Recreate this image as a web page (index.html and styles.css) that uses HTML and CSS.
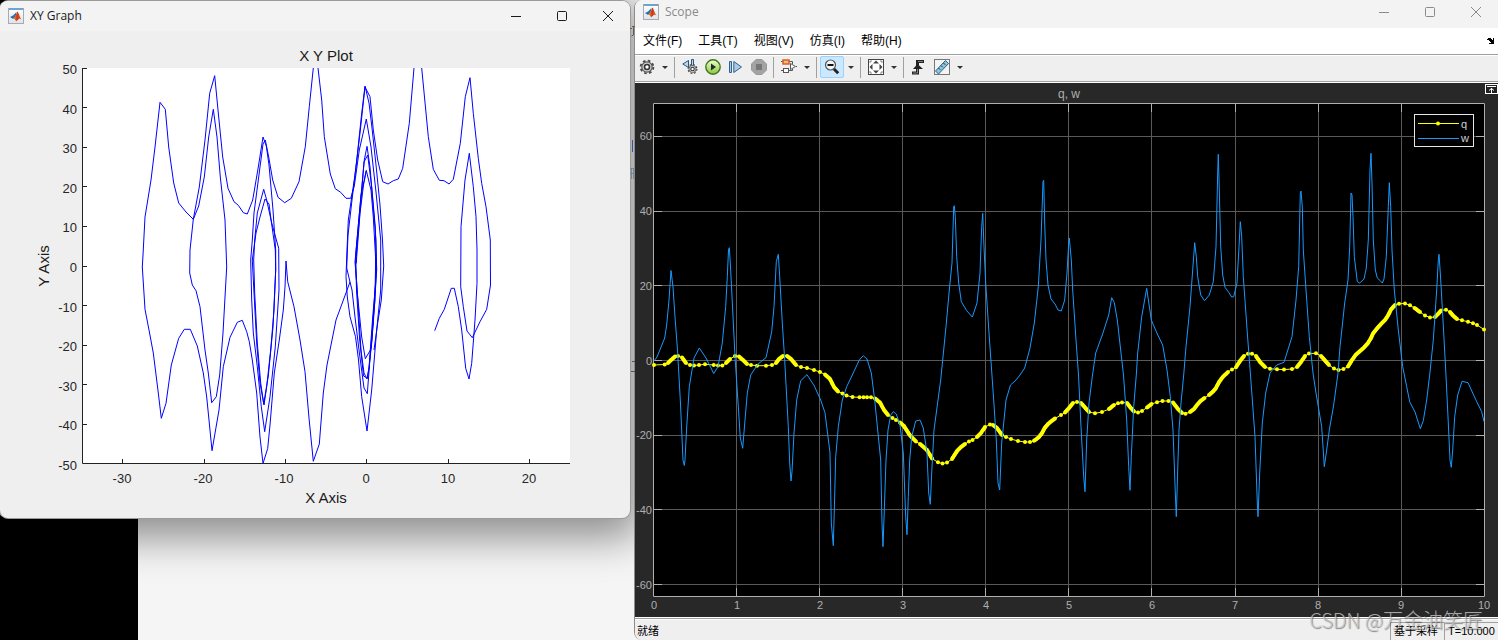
FILE: index.html
```html
<!DOCTYPE html>
<html lang="zh-CN">
<head>
<meta charset="utf-8">
<title>XY Graph / Scope</title>
<link rel="stylesheet" href="styles.css">
</head>
<body>
<svg class="defs" width="0" height="0" aria-hidden="true">
  <defs>
    <linearGradient id="lgFrame" x1="0" y1="0" x2="0" y2="1"><stop offset="0" stop-color="#fff"/><stop offset="1" stop-color="#dfe3ea"/></linearGradient>
    <linearGradient id="lgFlame" x1="0" y1="0" x2="1" y2="0"><stop offset="0" stop-color="#f6a12c"/><stop offset=".5" stop-color="#c9351b"/><stop offset="1" stop-color="#e8762a"/></linearGradient>
    <linearGradient id="lgGreen" x1="0" y1="0" x2="0" y2="1"><stop offset="0" stop-color="#f0ffcf"/><stop offset="1" stop-color="#8cc63a"/></linearGradient>
    <symbol id="matlab" viewBox="0 0 16 16">
      <rect x=".5" y=".5" width="15" height="15" fill="url(#lgFrame)" stroke="#a3abb5"/>
      <rect x="1" y="0" width="14" height="2" fill="#6fa3cc"/>
      <path d="M2 9l3-1.500L8.500 4 7.500 9 5 11z" fill="#2f6fae"/>
      <path d="M5 11l2.500-3L9.300 3.500c1.400 1 2.200 5 4.200 8-1.500-1-2.300-1-3.500.2L8 13.500C7.500 11.500 6.500 11 5 11z" fill="url(#lgFlame)"/>
    </symbol>
    <symbol id="gear" viewBox="0 0 16 16">
      <circle cx="8" cy="8" r="6.400" fill="none" stroke="#4a4a4a" stroke-width="1.800" stroke-dasharray="2.700 2.327"/>
      <circle cx="8" cy="8" r="5.200" fill="#d2d2d2" stroke="#555" stroke-width="1.200"/>
      <circle cx="8" cy="8" r="2.500" fill="#fff" stroke="#333" stroke-width="1.600"/>
    </symbol>
  </defs>
</svg>

<main class="desktop">
  <div class="terminal"></div>
  <svg class="fragments" width="6" height="400" viewBox="629 0 6 400" aria-hidden="true">
    <path d="M630 28.500h2M632 26.500h3M633.500 27v8l-2 1" stroke="#6a5a50" fill="none"/>
    <path d="M632.500 140v12" stroke="#3c4ea8"/>
    <path d="M630 168.500h4M630 173.500h4M631.500 168v11M633.500 168v11" stroke="#7b8794"/>
    <path d="M632 361.500h3M631 371.500h4" stroke="#555"/>
  </svg>

  <section class="window xy" aria-label="XY Graph">
    <header class="titlebar">
      <svg class="app-icon" width="16" height="16"><use href="#matlab"/></svg>
      <h1 class="window-title">XY Graph</h1>
      <div class="caption-buttons">
        <button class="cap" aria-label="Minimize"><svg width="12" height="12"><path d="M1 6.500h10"/></svg></button>
        <button class="cap" aria-label="Maximize"><svg width="12" height="12"><rect x="1.500" y="1.500" width="9" height="9" rx="1"/></svg></button>
        <button class="cap" aria-label="Close"><svg width="12" height="12"><path d="M1 1l10 10M11 1L1 11"/></svg></button>
      </div>
    </header>
    <svg class="xy-plot" viewBox="0 31 630 487" role="img" aria-label="X Y Plot">
      <clipPath id="xyClip"><rect x="82" y="68" width="488" height="396"/></clipPath>
      <rect x="82" y="68" width="488" height="396" fill="#fff"/>
      <g class="xy-lines" clip-path="url(#xyClip)">
        <polyline points="356.300,263.300 356.700,256.700 360,213.300 363.500,185 366.300,170.500 371,190 373.300,217 375.700,260 375.700,283 372.700,317 369,368 367,379 364,373 361,350 356.700,283 355,262 357,240 360,206.700 364.300,160 367,146.300 370,167 372.700,200 376,240 376.700,270 373.300,323 371,349 365.300,358.700 361.700,337 357.300,293 355.500,266 357.500,240 361,200 364,162 367.700,155 371.700,187 375.300,227 376.300,270 374,305 372,340 369,368 367.300,378 363.500,376 359.500,338 356.500,290 355.700,255 361,195 366.300,170.500"/>
        <polyline points="375.700,255 375,300 371,345 367.300,393.700 364,388 359,350 355,317 352,290 350,282 346.700,291 336,320 327,365 323.300,393 319.300,444 313.300,461.300 309,418 305,371.700 300,340 294,306.700 287.700,281.700 286,261 285,287 283.300,310 279.300,340 274.300,373 270,425 267.700,448.500 263,463.500 260,437 256.700,393 252.300,360 249.300,341.700 246.700,331.700 242.300,320.300 237.300,322.300 230,337.300 223.300,366.700 219,410 212,450.700 209.300,423 206.700,397 203.300,373 197.300,346 190.300,329.300 184.300,329.300 178.700,338.300 171.300,365 166,403.300 161.300,418.300 158.300,393 153.300,353 149,330 145,309.300 142.300,267 143,255 145,217 151,180 155,147 160,102.300 165.300,109.300 168.700,147 173.700,183 178.700,203 186,212 193.300,219.300 198.700,206 204.300,177 208.700,137 213.300,109.300 217,137 220.300,177 225,220 226.700,267 223,333 219.700,375 216.300,396.700 211.700,402.700 208.300,373 205,350 200,306.700 196,290.700 192.300,285 189.700,273 190,250 193.300,219.300 199.300,187 205,140 209.700,93.300 214.700,75.700 218.300,113 222.700,157 228,188.300 234,201.700 238.300,205.300 243.300,212.700 247.300,214 252.700,200 258.300,167 263,137 266.300,146 269,165 273,210 275.700,250 275.700,270 274,310 270.700,350 266.700,386.700 264,405 260,383 256.700,343 254,293 252.300,260 256,233 260,217 265,199 269,204 270.700,217 275.300,250 275.700,270 273,327 268.300,376 263.700,404 260.700,383 257.300,343 254.700,293 253.700,260 254.700,240 257.300,213 263.700,189.300 266.700,200 271.700,223 278.700,248.300 279,290 275.300,346.700 270,396.700 264.700,431.700 261.300,406.700 257.300,366.700 253.300,333 251.700,300 250.700,260 252.300,240 254,213 260,167 263,144 265.300,140 268.700,157 272.700,180 278,197.300 284.700,202.700 291.300,198.300 299,181.700 305.300,146.700 309.300,106.700 313.300,68 315.700,50 318,68 321.700,100 324.300,136.700 330.300,174 335.300,188.700 340.700,192.300 346,198.300 350.700,198.300 354.300,186 359.300,150 366.300,119 371,147 376,192 380.700,240 380.700,290 376.700,330 371.700,390 367,431 361.700,396.700 358.500,360 355.500,336.700 350,316.700 347.300,297 346,276.700 347,250 348.300,220 355,175 360,133 365,87 370,96.700 373.300,130 377.700,160 382.700,181.700 388,184 393.300,180.700 398.300,179 402.700,168.300 409.300,123.300 414,68 418,40 421.700,68 428.300,136.700 433.300,169.300 439.300,180.300 444,180.700 449,184 453.300,179.300 460.300,143.300 465.300,96.700 470,77.700 473.300,113.300 478.300,158.300 481.700,183.300 486,206.700 490.300,240 490.500,285 486.700,309.300 480,321.700 472.300,337.700 467,331 463.300,306.700 460.700,286.700 461,226.700 465,180 469.300,153.300 473.300,186.700 476,216.700 477,250 477,283.300 475,320 471.700,363.300 469,379 465.700,368.300 461.700,330 458.300,306.700 454.300,288.300 451.300,288.300 444.300,309.300 439.300,318.300 434.700,330.700"/>
        <polyline points="350,282 346.700,268 348,235 352,200 357,158 361.500,115 365,86 369,103 372,128 376,165 380,205 382.500,240 383.700,266 381.300,300 377.700,323 374,350"/>
      </g>
      <path class="xy-axes" d="M82.500 68V463.500H570M82 68.500h5M82 107.500h5M82 147.500h5M82 186.500h5M82 226.500h5M82 266.500h5M82 305.500h5M82 345.500h5M82 384.500h5M82 424.500h5M122.500 464v-5M204.500 464v-5M285.500 464v-5M366.500 464v-5M448.500 464v-5M529.500 464v-5"/>
      <g class="xy-ticks xy-ticks-y">
        <text x="77" y="74">50</text><text x="77" y="114">40</text><text x="77" y="153">30</text><text x="77" y="193">20</text><text x="77" y="232">10</text><text x="77" y="272">0</text><text x="77" y="312">-10</text><text x="77" y="351">-20</text><text x="77" y="391">-30</text><text x="77" y="430">-40</text><text x="77" y="470">-50</text>
      </g>
      <g class="xy-ticks">
        <text x="122" y="483">-30</text><text x="203" y="483">-20</text><text x="284" y="483">-10</text><text x="366" y="483">0</text><text x="448" y="483">10</text><text x="529" y="483">20</text>
      </g>
      <text class="xy-label" x="326" y="61">X Y Plot</text>
      <text class="xy-label" x="326" y="503">X Axis</text>
      <text class="xy-label" transform="translate(49 266) rotate(-90)">Y Axis</text>
    </svg>
  </section>

  <section class="window scope" aria-label="Scope">
    <header class="titlebar">
      <svg class="app-icon" width="16" height="16"><use href="#matlab"/></svg>
      <h1 class="window-title">Scope</h1>
      <div class="caption-buttons">
        <button class="cap" aria-label="Minimize"><svg width="12" height="12"><path d="M1 6.500h10"/></svg></button>
        <button class="cap" aria-label="Maximize"><svg width="12" height="12"><rect x="1.500" y="1.500" width="9" height="9" rx="1"/></svg></button>
        <button class="cap" aria-label="Close"><svg width="12" height="12"><path d="M1 1l10 10M11 1L1 11"/></svg></button>
      </div>
    </header>
    <nav class="menubar">
      <button class="menu">文件(F)</button>
      <button class="menu">工具(T)</button>
      <button class="menu">视图(V)</button>
      <button class="menu">仿真(I)</button>
      <button class="menu">帮助(H)</button>
      <button class="dock" aria-label="Dock"><svg width="8" height="8"><path d="M0 2h1V1h3v1h1v1h1V1h1v6H2V6h2V5H3V4H2V3H0z" fill="#000"/></svg></button>
    </nav>
    <div class="toolbar">
      <button class="tool" aria-label="Settings"><svg width="16" height="16"><use href="#gear"/></svg></button>
      <button class="caret" aria-label="Settings options"></button>
      <i class="sep"></i>
      <button class="tool" aria-label="Step back"><svg width="16" height="16" viewBox="0 0 16 16"><path d="M6.500 1.500v7L.8 5z" fill="#bcd8ee" stroke="#28567c"/><path d="M9.500.5h2v6h-2z" fill="#bcd8ee" stroke="#28567c"/><use href="#gear" x="5" y="4.500" width="11" height="11"/></svg></button>
      <button class="tool" aria-label="Run"><svg width="16" height="16" viewBox="0 0 16 16"><circle cx="8" cy="8" r="7.200" fill="url(#lgGreen)" stroke="#41761b" stroke-width="1.400"/><path d="M6 4.500l5 3.500-5 3.500z" fill="#1d2c3a"/></svg></button>
      <button class="tool" aria-label="Step forward"><svg width="16" height="16" viewBox="0 0 16 16"><path d="M1.500 2.500h2v11h-2zM5.800 2.500v11L13.500 8z" fill="#a9cbe8" stroke="#2f618e"/></svg></button>
      <button class="tool" aria-label="Stop"><svg width="16" height="16" viewBox="0 0 16 16"><path d="M5 .5h6L15.500 5v6L11 15.500H5L.5 11V5z" fill="#a3a3a3" stroke="#999"/><rect x="5" y="5" width="6" height="6" fill="#777"/></svg></button>
      <i class="sep"></i>
      <button class="tool" aria-label="Highlight block"><svg width="16" height="16" viewBox="0 0 16 16"><path d="M8 2.500h3.500v2.500M0 2.500h2M0 11.500h2M8 11.500h3.500V10M15 7.500h1" fill="none" stroke="#555"/><path d="M9.500 4.500l5 3-5 3z" fill="#fff" stroke="#555"/><rect x="2" y="1" width="6" height="4" fill="#f8bb79" stroke="#d9541a" stroke-width="1.400"/><rect x="2.500" y="9.500" width="5" height="4" fill="#fff" stroke="#555"/></svg></button>
      <button class="caret" aria-label="Highlight options"></button>
      <i class="sep"></i>
      <button class="tool selected" aria-label="Zoom out"><svg width="16" height="16" viewBox="0 0 16 16"><path d="M9.500 9.500l4.700 4.700" stroke="#222" stroke-width="3"/><circle cx="6.500" cy="6" r="5" fill="#eef6fb" stroke="#555" stroke-width="1.200"/><path d="M3.500 6h6" stroke="#111" stroke-width="2"/></svg></button>
      <button class="caret" aria-label="Zoom options"></button>
      <i class="sep"></i>
      <button class="tool" aria-label="Fit to view"><svg width="16" height="16" viewBox="0 0 16 16"><rect x=".5" y=".5" width="15" height="15" fill="#fff" stroke="#444"/><path d="M8 1.500l3 3H5zM8 14.500l3-3H5zM1.500 8l3-3v6zM14.500 8l-3-3v6z" fill="#444"/><path d="M2 4V2h2M12 2h2v2M2 12v2h2M12 14h2v-2" fill="none" stroke="#888"/></svg></button>
      <button class="caret" aria-label="Fit options"></button>
      <i class="sep"></i>
      <button class="tool" aria-label="Trigger"><svg width="16" height="16" viewBox="0 0 16 16"><path d="M1 14h5.500V2.500H13" fill="none" stroke="#222" stroke-width="3"/><path d="M2 10l4.500-5L12 10z" fill="#222"/><path d="M2 14h4.500V10M7 2.500h5" fill="none" stroke="#999" stroke-width=".8"/></svg></button>
      <button class="tool" aria-label="Measurements"><svg width="16" height="16" viewBox="0 0 16 16"><rect x=".5" y=".5" width="15" height="15" fill="#f4f4f4" stroke="#777"/><path d="M1.500 12L11.500 1.500l3 3L4.500 15z" fill="#8fc4df" stroke="#2d617f"/><path d="M4.500 9l1.800 1.800M7 6.500l1.800 1.800M9.500 4l1.800 1.800" stroke="#1c4058"/></svg></button>
      <button class="caret" aria-label="Measurement options"></button>
    </div>
    <div class="plot-area">
      <svg class="scope-plot" viewBox="635 83 863 534" role="img" aria-label="q, w">
        <rect x="653" y="103" width="832" height="494" fill="#000"/>
        <path class="grid" d="M736.500 104V596M819.500 104V596M902.500 104V596M985.500 104V596M1068.500 104V596M1151.500 104V596M1235.500 104V596M1318.500 104V596M1401.500 104V596M654 136.500H1484M654 211.500H1484M654 285.500H1484M654 360.500H1484M654 435.500H1484M654 509.500H1484M654 584.500H1484"/>
        <path class="ticks" d="M653.500 103.500H1484.500V596.500H653.500zM736.500 104v8M819.500 104v8M902.500 104v8M985.500 104v8M1068.500 104v8M1151.500 104v8M1235.500 104v8M1318.500 104v8M1401.500 104v8M736.500 596v-8M819.500 596v-8M902.500 596v-8M985.500 596v-8M1068.500 596v-8M1151.500 596v-8M1235.500 596v-8M1318.500 596v-8M1401.500 596v-8M654 136.500h8M654 211.500h8M654 285.500h8M654 360.500h8M654 435.500h8M654 509.500h8M654 584.500h8M1484 136.500h-8M1484 211.500h-8M1484 285.500h-8M1484 360.500h-8M1484 435.500h-8M1484 509.500h-8M1484 584.500h-8"/>
        <polyline class="signal-q" id="signalQ" points="654,365 664.700,364.500 668,363 671,360 675,356.500 678,356 682,357.500 686,363 690,365 694,365.500 699,365 705,364.300 713.700,365 718,365.500 722.300,365.500 726,363 730,359 735,356 739,356.500 743,360 747,364 751,365 757,365.700 766,365.700 772,365 776,363 779,359 783,356 787,356 791,359 796,365 801,367 807,368 814,370 820,372 825,374.500 830,379 834,387 838,391.500 842.500,393.500 846.500,395.500 852.500,397 859.500,397.300 863.500,397.300 867,397.300 871,397.300 875,398.500 880,402.500 884,410 888,415 892.500,418 896,420 900,422.500 904,426 909,434 912,437.500 916,441.500 920,444 923,446.500 927,450 932,458.500 938,462.300 942.500,463.500 947,462.500 952,459 957,451 961,447 965,444 969,441.500 972.500,440 977,437 981,433 985,427 990,424.500 993,425 997,428 1002,435 1006,437 1011,439 1018,441 1025,442 1030,442 1034,440.800 1038.500,437.500 1042,433 1045,427.500 1048,424 1051,421.500 1055,418.500 1061,415 1065,412.500 1069,408 1073,403 1077,402 1081,403 1085,407.500 1089,412 1095,413.300 1102,412 1109,409 1114,405 1118,403.300 1122,402.500 1127,403 1130,407 1134,411.500 1138,412.500 1142,411 1147,407.500 1151.500,404 1157,402.200 1162.500,401 1168.500,401 1173,402.500 1178,409 1182,413 1185.500,413.700 1190,412 1194,409 1197,405 1200.500,401 1204.500,398 1209,395 1213,391.500 1216,388 1219,382 1223,376.700 1228,372 1232,369.500 1236,367.300 1240,361 1244,356 1248,353.700 1252,353.700 1256,356 1260,362 1265,367 1270,368.700 1277,369.300 1284,369.600 1292,369 1297,367 1301,362 1305,356 1309,353.500 1316,353.300 1321,356 1325,360.500 1329,365 1334,368.500 1338.500,370 1343.500,369 1348,366.500 1352,360 1356,354.500 1360,351 1364,347.500 1368,343 1371,338 1373,333.500 1377,328.500 1381,324 1385,320 1388,315.500 1391,309.500 1395,305 1399,303.700 1405,303.500 1410,305.300 1414.500,308 1420,312 1425,315.500 1430,317.500 1435,317 1438,314 1441,310.500 1446,309.700 1450,312 1453,315.500 1457,319 1462,320.300 1468,321.800 1473,323.300 1477,325 1484,329.500"/>
        <g class="markers-q" id="markersQ"></g>
        <polyline class="signal-w" points="654,361 657,357 664.700,338 666.700,325 669,300 671,270.500 673,287 675,317 677.500,350 680.500,404 683,460 684.300,465.500 685,460 686.700,427 689.300,386.700 694,358 699.300,348 706,358 713.700,373.500 718,366.700 722.300,343 725.700,306.700 727.300,276.700 728.500,250 729.300,247.700 730.300,263 731.700,290 735,356.700 738,402 740.300,438 742.700,448.300 745,420 747.300,393 750.700,375 758,364 766,357.700 771.700,331.700 774,306.700 776.300,261.700 778.300,254.300 779.700,276.700 782.300,323 784.700,360 787,403 788.300,426.700 789.700,463 791,481 792,471.700 794,433 796.700,400 800.700,380.700 807,374.700 814.300,386 820.700,400 825,412.700 830,453 831.300,523 833.300,545.700 834.300,510 835.700,456.700 838.300,426.700 842.300,400 846.700,386.700 852.300,375 859.300,360 863.300,355.700 867,359 871.300,373 874.700,400 880.700,460 882,523.300 883,546.700 884.300,510 886,460 888,430 890.700,415 893.300,411.700 896.300,414 900,425 903.300,453 905.700,516.700 907,534.700 908.300,496.700 909.700,460 911.700,436.700 915.700,421 920,420 923.300,428 927,453 928.700,493 930.300,504.300 931.700,473 934,430 938,400 940.700,380 946,326.700 949.300,290 952,263 953.700,206.700 954.300,205.700 955.300,216.700 956.700,256.700 958.700,283 961.300,301.700 966.700,310.700 972.300,317 977,303 980,273 981.700,226.700 982.700,213.300 984,246.700 985.700,283 989,333 992.300,380 993.700,400 996.300,440 998,483 999.700,490 1001.700,443 1006,400 1010.500,385 1016,380 1020,375 1024.700,368 1030,348 1034.300,323 1038.300,286.700 1041,240 1043,181.700 1043.700,180.300 1044.700,223 1046,260 1048,285 1051,299 1055,304 1058,310 1061.300,311 1064.700,300 1067,273 1068.700,243 1069.300,238 1071.300,260 1072.700,290 1076,340 1078.500,375 1081,426.700 1083.700,476.700 1085,491.700 1086.700,440 1089,403 1092.500,375 1095.700,353 1102.300,335 1108.700,315 1111.700,297.700 1114.300,302.700 1117.300,320 1121,353 1123.500,375 1126.700,420 1128.700,466.700 1130,490.300 1131.300,456.700 1133.700,406.700 1136.300,375 1137.700,353 1141.700,316.700 1146.700,288.300 1151.300,320 1157.300,334 1162.700,345 1167,370 1170.300,396.700 1173,430 1175.300,493 1176.300,516.700 1177.700,470 1179,430 1181,403 1183.700,375 1186,346.700 1190,306.700 1192.700,270 1194.700,242.700 1196.300,256.700 1197.700,276.700 1200.700,295 1204.500,300.700 1209.300,295 1213.300,281.700 1216,246.700 1217.700,173 1218.300,154.300 1219.300,190 1220.700,246.700 1222.700,275 1225,287.300 1228.700,292.300 1231.700,297 1233.700,296.700 1237,283 1239,246.700 1240.300,221.700 1241.700,236.700 1243.300,276.700 1247.300,333 1250.500,375 1255,436.700 1257.300,503 1258,516.700 1259.700,473 1262.300,423 1265.700,393 1270,373 1276.700,365 1284,362.300 1292,336.700 1296,300 1298.700,266.700 1300.300,193 1301,191 1302.300,206.700 1303.300,250 1306,290 1309.300,336.700 1313,373 1316,393 1321.700,426.700 1324.300,466.700 1326.700,450 1329.300,430 1333.700,405 1338,373 1340,346.700 1344.700,303 1348,280 1349.700,246.700 1351,193 1352,195 1353,216.700 1354.300,256.700 1357.300,281.700 1359.700,283 1364,279 1366.300,268 1368.300,240 1370,170 1371,153.300 1372,183 1373.300,240 1375.300,270 1377.300,278 1380.300,280.700 1382.300,283 1384,279 1386.300,256.700 1388.300,206.700 1389.300,182.700 1390.700,206.700 1392,250 1394.300,290 1398.300,330 1402.700,366.700 1406.700,386.700 1409.700,401.700 1415,412 1420.300,428.700 1423.300,420.700 1426.700,400 1430,372 1433.300,340 1436.700,290 1438.300,260 1439,254.300 1440.300,273 1443,320 1446,376 1448.300,423 1450,460 1451.300,467.300 1452.700,450 1454.700,416.700 1457.700,395 1462,381.300 1468,382.700 1476.700,401.700 1481.700,411.700 1484,421.700"/>
        <g class="scope-ticks scope-ticks-y">
          <text x="652" y="140">60</text><text x="652" y="215">40</text><text x="652" y="290">20</text><text x="652" y="365">0</text><text x="652" y="439">-20</text><text x="652" y="514">-40</text><text x="652" y="589">-60</text>
        </g>
        <g class="scope-ticks">
          <text x="654" y="609">0</text><text x="737" y="609">1</text><text x="820" y="609">2</text><text x="903" y="609">3</text><text x="986" y="609">4</text><text x="1069" y="609">5</text><text x="1152" y="609">6</text><text x="1235" y="609">7</text><text x="1318" y="609">8</text><text x="1401" y="609">9</text><text x="1484" y="609">10</text>
        </g>
        <text class="scope-title" x="1069" y="98">q, w</text>
        <rect x="1414.500" y="114.500" width="59" height="32" fill="#000" stroke="#e6e6e6"/>
        <path d="M1418 123.500h41" stroke="#ff0"/><circle cx="1438" cy="123.500" r="2" fill="#ff0"/>
        <path d="M1418 138.500h41" stroke="#1899ff"/>
        <text class="legend-text" x="1461" y="128">q</text>
        <text class="legend-text" x="1461" y="142">w</text>
      </svg>
      <button class="maximize-axes" aria-label="Maximize axes"><svg width="13" height="10"><rect x=".5" y=".5" width="12" height="9" fill="#222" stroke="#fff"/><path d="M2 2.500h9M6.500 4v5M4 6.500l2.500-2 2.500 2" fill="none" stroke="#fff"/></svg></button>
    </div>
    <footer class="statusbar">
      <span class="status-text">就绪</span>
      <span class="status-cell">基于采样</span>
      <span class="status-cell">T=10.000</span>
    </footer>
  </section>
  <p class="watermark">CSDN @万金油笑匠</p>
</main>
<script src="chart.js"></script>
</body>
</html>
```

FILE: styles.css
```css
* { box-sizing: border-box; }
body { margin: 0; font-family: "Open Sans", "Noto Sans CJK SC", sans-serif; font-size: 12px; overflow: hidden; }
button { border: 0; padding: 0; margin: 0; background: none; font: inherit; color: inherit; }
svg { display: block; }
.defs { position: absolute; }

.desktop { position: relative; min-height: 100vh; background: #f5f5f5; overflow: hidden; }
.terminal { position: absolute; left: 0; top: 0; bottom: 0; width: 138px; background: #000; }
.fragments { position: absolute; left: 629px; top: 0; z-index: 2; }

.window { position: absolute; display: flex; flex-direction: column; }
.xy { left: 0; top: 1px; width: 630px; background: #efefef; border-radius: 8px; overflow: hidden; box-shadow: 0 0 0 1px #9b9b9b, 0 10px 40px 10px rgba(0, 0, 0, .42); }
.scope { left: 634px; right: 0; top: 0; bottom: 0; background: #efefef; border-left: 1px solid #8c8c8c; border-radius: 8px 0 0 8px; overflow: hidden; z-index: 1; }

.titlebar { display: flex; align-items: center; flex: none; background: #f3f3f3; color: #1a1a1a; }
.xy .titlebar { height: 30px; padding-left: 8px; }
.scope .titlebar { height: 28px; padding: 0 0 4px 8px; color: #8a8a8a; }
.app-icon { flex: none; }
.window-title { margin: 0 auto 0 6px; font-size: 12px; font-weight: 400; line-height: 16px; }
.caption-buttons { display: flex; }
.cap { width: 46px; height: 24px; padding-left: 2px; display: grid; place-items: center; }
.cap svg { fill: none; stroke: currentColor; }

.xy-plot { width: 100%; height: auto; }
.xy-lines { fill: none; stroke: #00f; stroke-width: 1; }
.xy-axes { fill: none; stroke: #222; }
.xy-ticks { font: 13px "Liberation Sans", sans-serif; fill: #262626; text-anchor: middle; }
.xy-ticks-y { text-anchor: end; }
.xy-label { font: 15px "Liberation Sans", sans-serif; fill: #1a1a1a; text-anchor: middle; }

.menubar { display: flex; flex: none; align-items: center; gap: 16px; height: 26px; padding: 0 3px 0 8px; background: #fff; color: #000; font-family: "Liberation Sans", "Noto Sans CJK SC", sans-serif; line-height: 16px; }
.dock { margin-left: auto; }
.toolbar { display: flex; flex: none; align-items: center; height: 28px; padding-bottom: 2px; border-top: 1px solid #a0a0a0; border-bottom: 1px solid #a0a0a0; box-shadow: inset 0 1px #fff; background: #efefef; }
.tool { width: 23px; height: 22px; display: grid; place-items: center; }
.selected { width: 24px; background: #cce8ff; border: 1px solid #99d1ff; border-radius: 2px; }
.caret { width: 13px; height: 20px; display: grid; place-items: center; }
.caret::before { content: ""; border: 3px solid transparent; border-top-color: #333; border-bottom: 0; }
.sep { width: 1px; height: 21px; margin: 0 3px; background: #a0a0a0; }

.plot-area { position: relative; flex: 1; min-height: 0; background: #282828; border-top: 1px solid #fff; border-bottom: 1px solid #fff; }
.scope-plot { width: 100%; height: 100%; }
.grid { stroke: #5a5a5a; fill: none; }
.ticks { stroke: #afafaf; fill: none; }
.signal-q { fill: none; stroke: #ff0; stroke-width: 1; }
.markers-q { fill: #ff0; }
.signal-w { fill: none; stroke: #1899ff; stroke-width: 1; }
.scope-ticks { font: 11px "Liberation Sans", sans-serif; fill: #afafaf; text-anchor: middle; }
.scope-ticks-y { text-anchor: end; }
.scope-title { font: 12px "Liberation Sans", sans-serif; fill: #afafaf; text-anchor: middle; }
.legend-text { font: 11px "Liberation Sans", sans-serif; fill: #d0d0d0; }
.maximize-axes { position: absolute; right: 0; top: 1px; }

.statusbar { display: flex; height: 22px; flex: none; border-top: 1px solid #a0a0a0; box-shadow: inset 0 1px #fff; background: #efefef; color: #000; font: 11px/24px "Liberation Sans", "Noto Sans CJK SC", sans-serif; }
.status-text { margin-right: auto; padding-left: 2px; }
.status-cell { width: 54px; margin-top: 3px; padding-left: 3px; line-height: 17px; border-left: 1px solid #a0a0a0; border-top: 1px solid #a0a0a0; white-space: nowrap; }

.watermark { position: absolute; right: 15px; bottom: 10px; z-index: 3; margin: 0; font: 300 20px/20px "Noto Sans CJK SC", sans-serif; color: rgba(200, 200, 200, .8); text-shadow: 1px 1px 1px rgba(60, 60, 60, .6); white-space: nowrap; }
```

FILE: chart.js
```javascript
// Puts round sample markers along the q signal, closer together where it is steep.
const signal = document.getElementById("signalQ");
const layer = document.getElementById("markersQ");

function addMarker(x, y) {
  const dot = document.createElementNS("http://www.w3.org/2000/svg", "circle");
  dot.setAttribute("cx", x);
  dot.setAttribute("cy", y);
  dot.setAttribute("r", 2);
  layer.appendChild(dot);
}

const points = Array.from(signal.points);
points.forEach((p, i) => {
  addMarker(p.x, p.y);
  const next = points[i + 1];
  if (!next) return;
  const dx = next.x - p.x;
  const dy = next.y - p.y;
  if (Math.abs(dy) > 0.7 * dx) {
    const steps = Math.ceil(Math.hypot(dx, dy) / 1.5);
    for (let k = 1; k < steps; k++) addMarker(p.x + dx * k / steps, p.y + dy * k / steps);
  }
});
```
